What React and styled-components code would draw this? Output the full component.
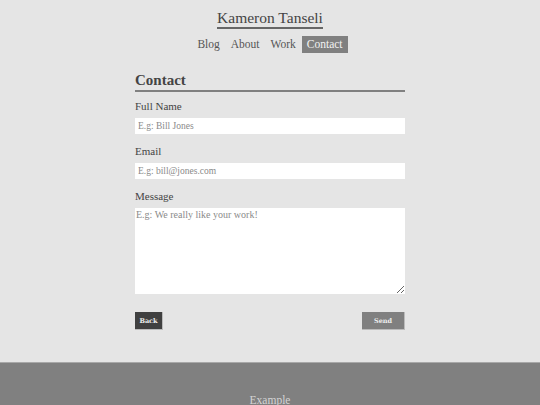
import React from 'react'
import styled, { createGlobalStyle } from 'styled-components'

const GlobalStyle = createGlobalStyle`
  html, body {
    margin: 0;
    padding: 0;
    background: #e5e5e5;
    font-family: "Liberation Serif", serif;
    color: #444;
  }
  * { box-sizing: border-box; }
`

const Page = styled.div`
  display: flex;
  flex-direction: column;
`

const Header = styled.header`
  display: flex;
  flex-direction: column;
  align-items: center;
  padding-top: 9px;
`

const Title = styled.h1`
  margin: 0;
  font-size: 15.5px;
  font-weight: normal;
  color: #444;
  line-height: 17px;
  padding-bottom: 1px;
  border-bottom: 2px solid #666;
`

const Nav = styled.nav`
  display: flex;
  gap: 1px;
  margin-top: 7px;
`

const NavLink = styled.a`
  font-size: 11.5px;
  line-height: 17px;
  padding: 0 5px;
  color: ${p => (p.$active ? '#f2f2f2' : '#555')};
  background: ${p => (p.$active ? '#808080' : 'transparent')};
  text-decoration: none;
`

const Main = styled.main`
  width: 270px;
  margin: 18px auto 0;
`

const Heading = styled.h2`
  margin: 0;
  font-size: 15px;
  font-weight: bold;
  color: #444;
  line-height: 18px;
  padding-bottom: 1px;
  border-bottom: 2px solid #808080;
`

const Form = styled.form`
  display: flex;
  flex-direction: column;
  margin-top: 7px;
`

const Label = styled.label`
  font-size: 11px;
  line-height: 14px;
  color: #444;
  margin-bottom: 5px;
`

const Input = styled.input`
  border: none;
  outline: none;
  background: #fff;
  height: 16px;
  padding: 0 3px;
  font-family: "Liberation Serif", serif;
  font-size: 9.5px;
  margin-bottom: 10px;
  &::placeholder { color: #8a8a8a; }
`

const TextArea = styled.textarea`
  border: none;
  outline: none;
  background: #fff;
  height: 86px;
  padding: 0 1px;
  font-family: "Liberation Serif", serif;
  font-size: 10px;
  line-height: 13px;
  resize: vertical;
  &::placeholder { color: #8a8a8a; }
`

const Actions = styled.div`
  display: flex;
  justify-content: space-between;
  margin-top: 18px;
`

const Button = styled.button`
  border: none;
  border-right: 1px solid #bbb;
  border-bottom: 1px solid #bbb;
  height: 18px;
  width: ${p => p.$w}px;
  padding: 0;
  font-family: "DejaVu Serif", serif;
  font-size: 6.5px;
  font-weight: bold;
  color: #eee;
  background: ${p => p.$bg};
  cursor: pointer;
`

const Footer = styled.footer`
  margin-top: 32px;
  background: #808080;
  border-top: 1px solid #a8a8a8;
  padding: 30px 0 10px;
  display: flex;
  justify-content: center;
`

const FooterText = styled.span`
  font-size: 11.5px;
  color: #d4d4d4;
  line-height: 14px;
`

export default function App() {
  return (
    <Page>
      <GlobalStyle />
      <Header>
        <Title>Kameron Tanseli</Title>
        <Nav>
          <NavLink href="#">Blog</NavLink>
          <NavLink href="#">About</NavLink>
          <NavLink href="#">Work</NavLink>
          <NavLink href="#" $active>Contact</NavLink>
        </Nav>
      </Header>
      <Main>
        <Heading>Contact</Heading>
        <Form onSubmit={e => e.preventDefault()}>
          <Label htmlFor="name">Full Name</Label>
          <Input id="name" placeholder="E.g: Bill Jones" />
          <Label htmlFor="email">Email</Label>
          <Input id="email" placeholder="E.g: bill@jones.com" />
          <Label htmlFor="message">Message</Label>
          <TextArea id="message" placeholder="E.g: We really like your work!" />
          <Actions>
            <Button type="button" $bg="#404040" $w={28}>Back</Button>
            <Button type="submit" $bg="#808080" $w={43}>Send</Button>
          </Actions>
        </Form>
      </Main>
      <Footer>
        <FooterText>Example</FooterText>
      </Footer>
    </Page>
  )
}
